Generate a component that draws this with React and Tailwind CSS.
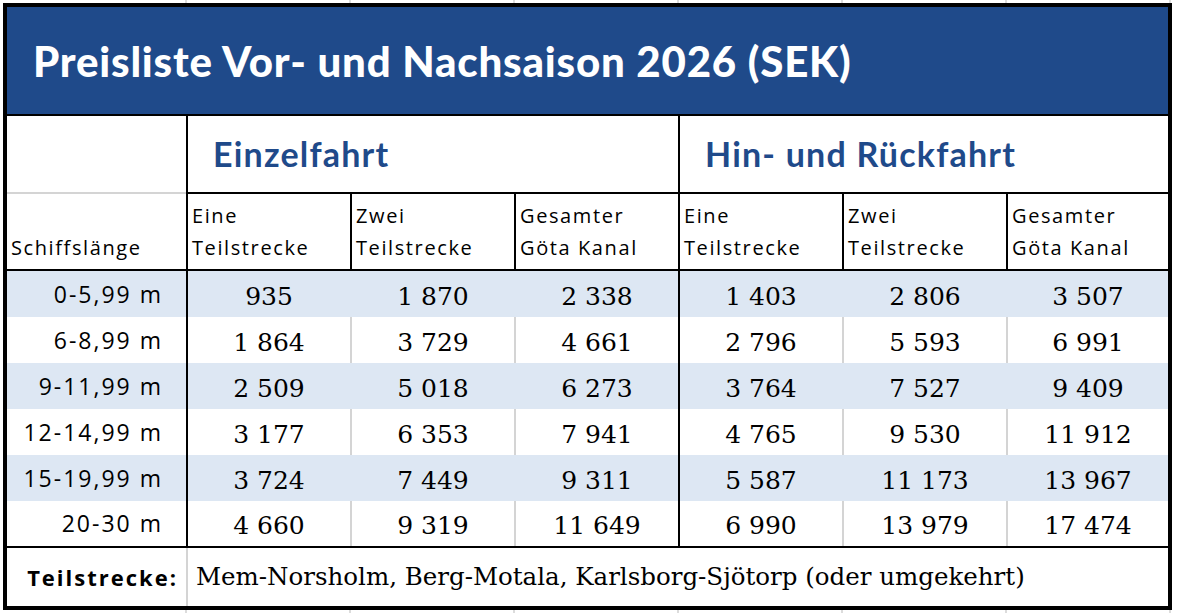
const COLS = 'grid grid-cols-[179px_164px_164px_164px_164px_164px_162px]';

const rows = [
  ['0-5,99 m', '935', '1 870', '2 338', '1 403', '2 806', '3 507'],
  ['6-8,99 m', '1 864', '3 729', '4 661', '2 796', '5 593', '6 991'],
  ['9-11,99 m', '2 509', '5 018', '6 273', '3 764', '7 527', '9 409'],
  ['12-14,99 m', '3 177', '6 353', '7 941', '4 765', '9 530', '11 912'],
  ['15-19,99 m', '3 724', '7 449', '9 311', '5 587', '11 173', '13 967'],
  ['20-30 m', '4 660', '9 319', '11 649', '6 990', '13 979', '17 474'],
];

const sub = [
  ['Eine', 'Teilstrecke'],
  ['Zwei', 'Teilstrecke'],
  ['Gesamter', 'Göta Kanal'],
  ['Eine', 'Teilstrecke'],
  ['Zwei', 'Teilstrecke'],
  ['Gesamter', 'Göta Kanal'],
];

function Strip() {
  // spreadsheet gridlines peeking out above / below the table
  return (
    <div className="ml-[8px] h-[3px] grid grid-cols-[179px_164px_164px_164px_164px_164px_164px]">
      {[0, 1, 2, 3, 4, 5, 6].map((i) => (
        <div key={i} className="border-r-2 border-[#dcdcdc]" />
      ))}
    </div>
  );
}

export default function App() {
  return (
    <div className="w-[1180px] h-[616px] bg-white overflow-hidden font-['Open_Sans',sans-serif] text-black">
      <Strip />
      <div className="ml-[3px] w-[1169px] border-4 border-black">
        {/* title */}
        <div className="h-[109px] bg-[#1f4a8a] border-b-2 border-black flex items-center pl-[26px]">
          <h1 className="text-white font-['Lato',sans-serif] font-black text-[42px] leading-none tracking-[0.8px]">
            Preisliste Vor- und Nachsaison 2026 (SEK)
          </h1>
        </div>

        {/* group header */}
        <div className={COLS + ' h-[78px] font-["Lato",sans-serif]'}>
          <div className="border-b-2 border-[#d4d4d4]" />
          <div className="col-span-3 border-l-2 border-b-2 border-black flex items-center pl-[25px]">
            <span className="text-[#1f4a8a] font-bold text-[34px] leading-none tracking-[1.2px]">Einzelfahrt</span>
          </div>
          <div className="col-span-3 border-l-2 border-b-2 border-black flex items-center pl-[25px]">
            <span className="text-[#1f4a8a] font-bold text-[34px] leading-none tracking-[1.2px]">Hin- und Rückfahrt</span>
          </div>
        </div>

        {/* column header */}
        <div className={COLS + ' h-[77px] border-b-2 border-black text-[20px] leading-[32px] tracking-[1.6px]'}>
          <div className="flex items-end pl-[4px] pb-[5px]">Schiffslänge</div>
          {sub.map((s, i) => (
            <div key={i} className="border-l-2 border-black flex flex-col justify-end pl-[4px] pb-[5px]">
              <span>{s[0]}</span>
              <span>{s[1]}</span>
            </div>
          ))}
        </div>

        {/* data */}
        {rows.map((r, ri) => {
          const band = ri % 2 === 0;
          const last = ri === rows.length - 1;
          return (
            <div
              key={ri}
              className={
                COLS +
                (last ? ' h-[47px] border-b-2 border-black' : ' h-[46px]') +
                (band ? ' bg-[#dde7f3]' : '')
              }
            >
              <div className="flex items-center justify-end pr-[23px] text-[23px] tracking-[2px]">{r[0]}</div>
              {r.slice(1).map((v, ci) => (
                <div
                  key={ci}
                  className={
                    'border-l-2 flex items-center justify-center pt-[5px] font-["DejaVu_Serif",serif] text-[25px] ' +
                    (ci === 0 || ci === 3 ? 'border-black' : band ? 'border-transparent' : 'border-[#d4d4d4]')
                  }
                >
                  {v}
                </div>
              ))}
            </div>
          );
        })}

        {/* footer */}
        <div className={COLS + ' h-[58px]'}>
          <div className="flex items-center justify-end pr-[8px] font-bold text-[22px] tracking-[2px]">Teilstrecke:</div>
          <div className="col-span-6 border-l-2 border-[#d4d4d4] flex items-center pl-[8px] font-['DejaVu_Serif',serif] text-[24.5px]">
            Mem-Norsholm, Berg-Motala, Karlsborg-Sjötorp (oder umgekehrt)
          </div>
        </div>
      </div>
      <Strip />
    </div>
  );
}
